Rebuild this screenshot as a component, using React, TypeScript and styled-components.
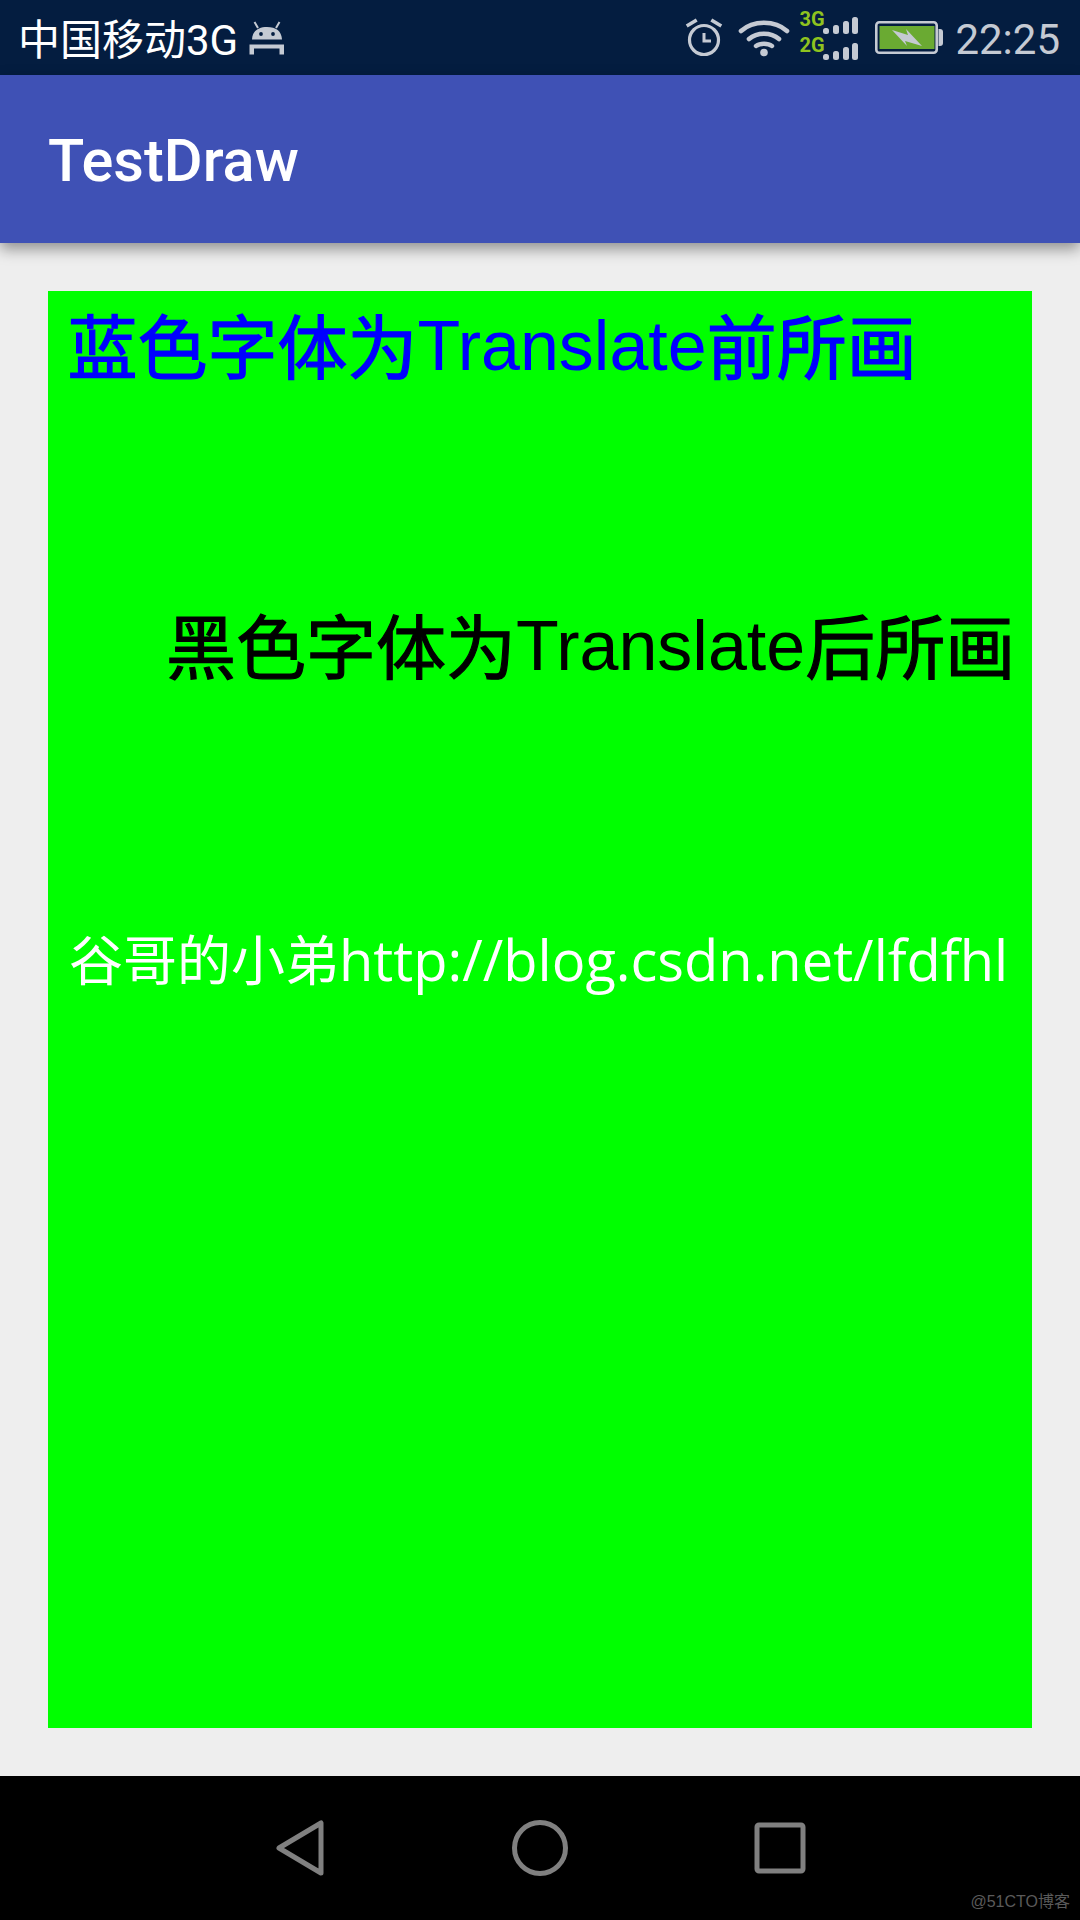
import styled, { createGlobalStyle } from 'styled-components';

const GlobalStyle = createGlobalStyle`
  html, body {
    margin: 0;
    padding: 0;
    background: #eeeeee;
  }
`;

const cjk = '"Noto Sans CJK SC", sans-serif';

function App() {
  return (
    <StyledPhone>
      <GlobalStyle />
      <StyledStatusBar>
        <StyledLeft>
          <StyledCarrier>中国移动3G</StyledCarrier>
          <AndroidIcon />
        </StyledLeft>
        <StyledRight>
          <AlarmIcon />
          <WifiIcon />
          <StyledSignals>
            <SignalRow label="3G" />
            <SignalRow label="2G" />
          </StyledSignals>
          <BatteryIcon />
          <StyledClock>22:25</StyledClock>
        </StyledRight>
      </StyledStatusBar>
      <StyledAppBar>
        <StyledTitle>TestDraw</StyledTitle>
      </StyledAppBar>
      <StyledContent>
        <StyledCanvas>
          <StyledBlueLine>
            <StyledHan>蓝色字体为</StyledHan>Translate<StyledHan>前所画</StyledHan>
          </StyledBlueLine>
          <StyledBlackLine>
            <StyledHan>黑色字体为</StyledHan>Translate<StyledHan>后所画</StyledHan>
          </StyledBlackLine>
          <StyledWhiteLine>
            谷哥的小弟<StyledLatin>http://blog.csdn.net/lfdfhl</StyledLatin>
          </StyledWhiteLine>
        </StyledCanvas>
      </StyledContent>
      <StyledNavBar>
        <svg width="60" height="60" viewBox="0 0 60 60">
          <path d="M51 5 V55 L9 30 Z" fill="none" stroke="#808080" strokeWidth="5" strokeLinejoin="round" />
        </svg>
        <svg width="60" height="60" viewBox="0 0 60 60">
          <circle cx="30" cy="30" r="25.5" fill="none" stroke="#808080" strokeWidth="5" />
        </svg>
        <svg width="60" height="60" viewBox="0 0 60 60">
          <rect x="7" y="7" width="46" height="46" rx="2" fill="none" stroke="#808080" strokeWidth="5" />
        </svg>
        <StyledWatermark>@51CTO博客</StyledWatermark>
      </StyledNavBar>
    </StyledPhone>
  );
}

export default App;

function SignalRow({ label }: { label: string }) {
  return (
    <StyledSignalRow>
      <StyledNetwork>{label}</StyledNetwork>
      <StyledBars>
        <StyledBar $height={6} />
        <StyledBar $height={9} />
        <StyledBar $height={13} />
        <StyledBar $height={17} />
      </StyledBars>
    </StyledSignalRow>
  );
}

function AndroidIcon() {
  return (
    <svg width="36" height="36" viewBox="0 0 36 36" fill="#c5cad3">
      <path d="M3 19.5 C3.5 11 9 7 18 7 C27 7 32.5 11 33 19.5 Z" />
      <path d="M9 8 L5.5 2 M27 8 L30.5 2" stroke="#c5cad3" strokeWidth="2" fill="none" />
      <circle cx="12" cy="14" r="1.9" fill="#041d40" />
      <circle cx="24" cy="14" r="1.9" fill="#041d40" />
      <path d="M0.5 24.5 H35 V34.5 H30.5 V28.5 H5 V34.5 H0.5 Z" />
    </svg>
  );
}

function AlarmIcon() {
  return (
    <StyledAlarmSvg width="38" height="40" viewBox="0 0 38 40" fill="none" stroke="#c5cad3">
      <circle cx="19" cy="22" r="14.5" strokeWidth="3.2" />
      <path d="M19 15 V23 H26" strokeWidth="3" />
      <path d="M1.7 8 L11.7 2 M36.3 8 L26.3 2" strokeWidth="3.6" />
    </StyledAlarmSvg>
  );
}

function WifiIcon() {
  return (
    <svg width="52" height="38" viewBox="0 0 52 38" fill="none" stroke="#c5cad3" strokeLinecap="round">
      <path d="M3 12 C15 1 37 1 49 12" strokeWidth="4.6" />
      <path d="M11 20 C19 13 33 13 41 20" strokeWidth="4.6" />
      <path d="M18 27 C22 24 30 24 34 27" strokeWidth="4.4" />
      <circle cx="26" cy="33.5" r="3.8" fill="#c5cad3" stroke="none" />
    </svg>
  );
}

function BatteryIcon() {
  return (
    <svg width="68" height="33" viewBox="0 0 68 33">
      <rect x="1.3" y="1.3" width="60.4" height="30.4" rx="3" fill="none" stroke="#c5cad3" strokeWidth="2.6" />
      <rect x="4.5" y="5" width="55" height="23" fill="#6aaa32" />
      <path d="M63.5 8 H65 Q68 8 68 11 V22 Q68 25 65 25 H63.5 Z" fill="#c5cad3" />
      <path d="M17 9 L33 14 L31 8 L47 25 L30 20 L32 25 Z" fill="#c5cad3" />
    </svg>
  );
}

const StyledPhone = styled.div`
  width: 1080px;
  height: 1920px;
  display: flex;
  flex-direction: column;
  overflow: hidden;
  background-color: #eeeeee;
`;

const StyledStatusBar = styled.header`
  height: 75px;
  flex: none;
  background-color: #041d40;
  display: flex;
  justify-content: space-between;
  align-items: center;
  padding: 0 20px 0 18px;
`;

const StyledLeft = styled.div`
  display: flex;
  align-items: center;
  gap: 11px;
`;

const StyledCarrier = styled.span`
  font-family: Roboto, ${cjk};
  font-size: 42px;
  color: #ffffff;
  margin-bottom: 3px;
`;

const StyledRight = styled.div`
  display: flex;
  align-items: center;
`;

const StyledAlarmSvg = styled.svg`
  margin-right: 15px;
`;

const StyledSignals = styled.div`
  display: flex;
  flex-direction: column;
  gap: 6px;
  margin: 0 18px 1px 9px;
`;

const StyledSignalRow = styled.div`
  display: flex;
  align-items: flex-end;
  height: 20px;
  width: 58px;
`;

const StyledNetwork = styled.span`
  font-family: Roboto, sans-serif;
  font-weight: 700;
  font-size: 20px;
  line-height: 20px;
  width: 24px;
  color: #8fc31f;
  transform: translateY(-5px);
`;

const StyledBars = styled.div`
  display: flex;
  align-items: flex-end;
  gap: 3.6px;
`;

const StyledBar = styled.span<{ $height: number }>`
  width: 6px;
  height: ${(props) => props.$height}px;
  border-radius: 2.5px;
  background-color: #c5cad3;
`;

const StyledClock = styled.span`
  font-family: Roboto, sans-serif;
  font-size: 42px;
  color: #c5cad3;
  margin: 3px 0 0 12px;
`;

const StyledAppBar = styled.div`
  height: 168px;
  flex: none;
  position: relative;
  background-color: #3f51b5;
  display: flex;
  align-items: center;
  padding: 4px 0 0 48px;
  box-sizing: border-box;
  box-shadow: 0 6px 14px rgba(0, 0, 0, 0.4);
`;

const StyledTitle = styled.h1`
  margin: 0;
  font-family: Roboto, sans-serif;
  font-weight: 500;
  font-size: 59.5px;
  color: #ffffff;
`;

const StyledContent = styled.main`
  flex: 1;
  padding: 48px;
`;

const StyledCanvas = styled.div`
  height: 100%;
  background-color: #00ff00;
  overflow: hidden;
`;

const StyledDrawnLine = styled.div`
  font-family: 'Liberation Sans', ${cjk};
  font-size: 70px;
  line-height: 80px;
  white-space: nowrap;
`;

const StyledHan = styled.span`
  -webkit-text-stroke: 1.2px currentColor;
  vertical-align: -4px;
`;

const StyledBlueLine = styled(StyledDrawnLine)`
  color: #0000ff;
  margin: 15px 0 0 19.5px;
`;

const StyledBlackLine = styled(StyledDrawnLine)`
  color: #000000;
  margin: 216px 0 0 118px;
`;

const StyledWhiteLine = styled(StyledDrawnLine)`
  font-family: ${cjk};
  font-size: 54px;
  color: #ffffff;
  margin: 228px 0 0 21px;
`;

const StyledLatin = styled.span`
  font-family: 'Open Sans', sans-serif;
  font-size: 56px;
`;

const StyledNavBar = styled.nav`
  height: 144px;
  flex: none;
  position: relative;
  background-color: #000000;
  display: flex;
  justify-content: center;
  align-items: center;
  gap: 180px;
`;

const StyledWatermark = styled.span`
  position: absolute;
  right: 10px;
  bottom: 8px;
  font-family: 'Liberation Sans', ${cjk};
  font-size: 16px;
  color: #5a5a5a;
`;
